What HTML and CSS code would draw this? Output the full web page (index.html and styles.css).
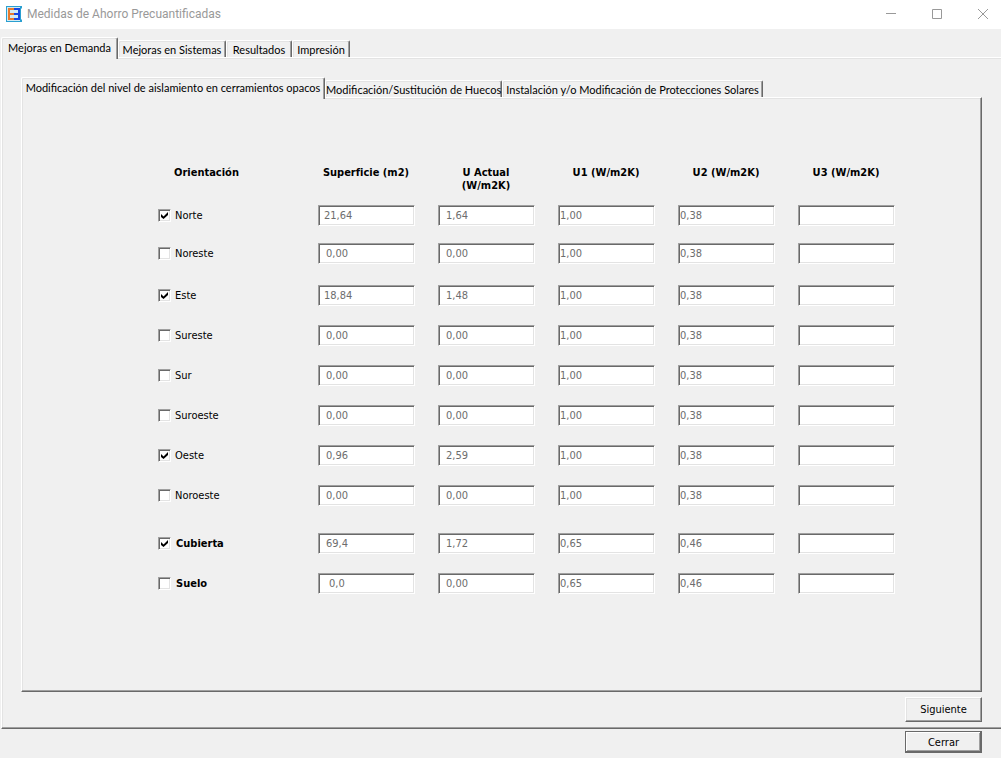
FILE: index.html
```html
<!DOCTYPE html>
<html lang="es">
<head>
<meta charset="utf-8">
<meta name="viewport" content="width=device-width, initial-scale=1">
<title>Medidas de Ahorro Precuantificadas</title>
<link rel="stylesheet" href="styles.css">
</head>
<body>
<header class="titlebar">
  <svg class="app-icon" width="16" height="16" viewBox="0 0 16 16" aria-hidden="true">
    <path fill="#2a9fd0" d="M0 0h16v2l-1 1v10l1 1v2H0z"/>
    <path fill="#d3ebf4" d="M1 1h13v14H1z"/>
    <path fill="#e87a2c" d="M2 2h6v2H4v3h4v2H4v3h4v2H2z"/>
    <path fill="#1747e0" d="M8 2h6v12H8v-2h4V9H8V7h4V4H8z"/>
  </svg>
  <h1 class="title">Medidas de Ahorro Precuantificadas</h1>
  <div class="window-controls">
    <button class="window-button" type="button" aria-label="Minimizar"><svg width="10" height="10" viewBox="0 0 10 10"><path d="M0 4.5h10"/></svg></button>
    <button class="window-button" type="button" aria-label="Maximizar"><svg width="10" height="10" viewBox="0 0 10 10"><path d="M.5.5h9v9h-9z"/></svg></button>
    <button class="window-button" type="button" aria-label="Cerrar ventana"><svg width="10" height="10" viewBox="0 0 10 10"><path d="M0 0l10 10M10 0L0 10"/></svg></button>
  </div>
</header>
<main class="workspace">
  <div class="tabs tabs-main" role="tablist">
    <button class="tab tab-active tab-demanda" type="button" role="tab" aria-selected="true">Mejoras en Demanda</button>
    <button class="tab tab-sistemas" type="button" role="tab">Mejoras en Sistemas</button>
    <button class="tab tab-resultados" type="button" role="tab">Resultados</button>
    <button class="tab tab-impresion" type="button" role="tab">Impresión</button>
  </div>
  <section class="panel panel-main">
    <div class="tabs tabs-inner" role="tablist">
      <button class="tab tab-active tab-opacos" type="button" role="tab" aria-selected="true">Modificación del nivel de aislamiento en cerramientos opacos</button>
      <button class="tab tab-huecos" type="button" role="tab">Modificación/Sustitución de Huecos</button>
      <button class="tab tab-solares" type="button" role="tab">Instalación y/o Modificación de Protecciones Solares</button>
    </div>
    <div class="panel panel-inner">
      <table class="measures">
        <thead>
          <tr><th class="col-name" scope="col">Orientación</th><th scope="col">Superficie (m2)</th><th scope="col">U Actual<br>(W/m2K)</th><th scope="col">U1 (W/m2K)</th><th scope="col">U2 (W/m2K)</th><th scope="col">U3 (W/m2K)</th></tr>
        </thead>
        <tbody>
          <tr class="row-short"><td><label class="check"><input type="checkbox" checked>Norte</label></td><td><input class="field pad-5" aria-label="Norte superficie" value="21,64" disabled></td><td><input class="field pad-7" aria-label="Norte U actual" value="1,64" disabled></td><td><input class="field" aria-label="Norte U1" value="1,00" disabled></td><td><input class="field" aria-label="Norte U2" value="0,38" disabled></td><td><input class="field" aria-label="Norte U3" disabled></td></tr>
          <tr class="row-medium"><td><label class="check"><input type="checkbox">Noreste</label></td><td><input class="field pad-7" aria-label="Noreste superficie" value="0,00" disabled></td><td><input class="field pad-7" aria-label="Noreste U actual" value="0,00" disabled></td><td><input class="field" aria-label="Noreste U1" value="1,00" disabled></td><td><input class="field" aria-label="Noreste U2" value="0,38" disabled></td><td><input class="field" aria-label="Noreste U3" disabled></td></tr>
          <tr><td><label class="check"><input type="checkbox" checked>Este</label></td><td><input class="field pad-5" aria-label="Este superficie" value="18,84" disabled></td><td><input class="field pad-7" aria-label="Este U actual" value="1,48" disabled></td><td><input class="field" aria-label="Este U1" value="1,00" disabled></td><td><input class="field" aria-label="Este U2" value="0,38" disabled></td><td><input class="field" aria-label="Este U3" disabled></td></tr>
          <tr><td><label class="check"><input type="checkbox">Sureste</label></td><td><input class="field pad-7" aria-label="Sureste superficie" value="0,00" disabled></td><td><input class="field pad-7" aria-label="Sureste U actual" value="0,00" disabled></td><td><input class="field" aria-label="Sureste U1" value="1,00" disabled></td><td><input class="field" aria-label="Sureste U2" value="0,38" disabled></td><td><input class="field" aria-label="Sureste U3" disabled></td></tr>
          <tr><td><label class="check"><input type="checkbox">Sur</label></td><td><input class="field pad-7" aria-label="Sur superficie" value="0,00" disabled></td><td><input class="field pad-7" aria-label="Sur U actual" value="0,00" disabled></td><td><input class="field" aria-label="Sur U1" value="1,00" disabled></td><td><input class="field" aria-label="Sur U2" value="0,38" disabled></td><td><input class="field" aria-label="Sur U3" disabled></td></tr>
          <tr><td><label class="check"><input type="checkbox">Suroeste</label></td><td><input class="field pad-7" aria-label="Suroeste superficie" value="0,00" disabled></td><td><input class="field pad-7" aria-label="Suroeste U actual" value="0,00" disabled></td><td><input class="field" aria-label="Suroeste U1" value="1,00" disabled></td><td><input class="field" aria-label="Suroeste U2" value="0,38" disabled></td><td><input class="field" aria-label="Suroeste U3" disabled></td></tr>
          <tr><td><label class="check"><input type="checkbox" checked>Oeste</label></td><td><input class="field pad-7" aria-label="Oeste superficie" value="0,96" disabled></td><td><input class="field pad-7" aria-label="Oeste U actual" value="2,59" disabled></td><td><input class="field" aria-label="Oeste U1" value="1,00" disabled></td><td><input class="field" aria-label="Oeste U2" value="0,38" disabled></td><td><input class="field" aria-label="Oeste U3" disabled></td></tr>
          <tr class="row-tall"><td><label class="check"><input type="checkbox">Noroeste</label></td><td><input class="field pad-7" aria-label="Noroeste superficie" value="0,00" disabled></td><td><input class="field pad-7" aria-label="Noroeste U actual" value="0,00" disabled></td><td><input class="field" aria-label="Noroeste U1" value="1,00" disabled></td><td><input class="field" aria-label="Noroeste U2" value="0,38" disabled></td><td><input class="field" aria-label="Noroeste U3" disabled></td></tr>
          <tr><td><label class="check check-strong"><input type="checkbox" checked>Cubierta</label></td><td><input class="field pad-7" aria-label="Cubierta superficie" value="69,4" disabled></td><td><input class="field pad-7" aria-label="Cubierta U actual" value="1,72" disabled></td><td><input class="field" aria-label="Cubierta U1" value="0,65" disabled></td><td><input class="field" aria-label="Cubierta U2" value="0,46" disabled></td><td><input class="field" aria-label="Cubierta U3" disabled></td></tr>
          <tr><td><label class="check check-strong"><input type="checkbox">Suelo</label></td><td><input class="field pad-10" aria-label="Suelo superficie" value="0,0" disabled></td><td><input class="field pad-7" aria-label="Suelo U actual" value="0,00" disabled></td><td><input class="field" aria-label="Suelo U1" value="0,65" disabled></td><td><input class="field" aria-label="Suelo U2" value="0,46" disabled></td><td><input class="field" aria-label="Suelo U3" disabled></td></tr>
        </tbody>
      </table>
    </div>
    <button class="push push-next" type="button">Siguiente</button>
  </section>
</main>
<footer class="footer">
  <button class="push push-default" type="button">Cerrar</button>
</footer>
</body>
</html>
```
FILE: styles.css
```css
* { box-sizing: border-box; }

body {
  margin: 0;
  min-height: 100vh;
  display: flex;
  flex-direction: column;
  background: #f0f0f0;
  color: #000;
  font: 11px/13px "DejaVu Sans Condensed", "DejaVu Sans", sans-serif;
}

button, input { font: inherit; color: inherit; }

/* Title bar */
.titlebar {
  display: flex;
  align-items: center;
  height: 29px;
  padding: 0 0 2px 6px;
  gap: 5px;
  background: #fff;
}
.title {
  flex: 1;
  margin: 0;
  color: #999;
  font: 12px/16px Roboto, "Noto Sans", sans-serif;
}
.window-controls { display: flex; }
.window-button {
  display: flex;
  align-items: center;
  justify-content: center;
  width: 46px;
  height: 26px;
  padding: 0 0 0 10px;
  border: 0;
  background: none;
}
.window-button svg { fill: none; stroke: #999; stroke-width: 1; }

/* Tabs */
.workspace { flex: 1; display: flex; flex-direction: column; }
.tabs { display: flex; align-items: flex-end; }
.tabs-main { height: 28px; padding-left: 1px; }
.tabs-inner { height: 38px; }
.tab {
  height: 17px;
  padding: 1px 0 0;
  border: 1px solid;
  border-color: #fff #696969 transparent #fff;
  border-bottom: 0;
  border-radius: 2px 2px 0 0;
  box-shadow: inset -1px 0 #a0a0a0, inset 1px 1px #e3e3e3;
  background: #f0f0f0;
  font-family: Lato, "Liberation Sans", sans-serif;
  text-align: center;
  white-space: nowrap;
}
.tab-active {
  position: relative;
  height: 22px;
  margin-bottom: -2px;
  padding: 0 0 3px;
}
.tab-demanda { width: 117px; }
.tab-sistemas { width: 108px; }
.tab-resultados { width: 66px; }
.tab-impresion { width: 58px; }
.tab-opacos { width: 304px; }
.tab-huecos { width: 177px; }
.tab-solares { width: 261px; }

/* Raised panels */
.panel {
  flex: 1;
  display: flex;
  flex-direction: column;
  border: 1px solid;
  border-color: #fff #696969 #696969 #fff;
  box-shadow: inset -1px -1px #a0a0a0, inset 1px 1px #e3e3e3;
}
.panel-main {
  margin-left: 1px;
  padding: 1px 19px 6px;
  border-right: 0;
  box-shadow: inset 0 -1px #a0a0a0, inset 1px 1px #e3e3e3;
}
.panel-inner { padding: 68px 86px 68px 136px; }

/* Measures table */
.measures {
  width: 100%;
  max-width: 737px;
  border-collapse: collapse;
  table-layout: fixed;
}
.measures th {
  padding: 0 24px 0 0;
  vertical-align: top;
  font-weight: bold;
  white-space: nowrap;
}
.measures th:last-child, .measures td:last-child { padding-right: 1px; }
.measures .col-name { width: 160px; padding: 0 0 0 16px; text-align: left; }
.measures th + th { width: 120px; }
.measures th:last-child { width: 97px; }
.measures thead tr { height: 39px; }
.measures tbody tr { height: 40px; }
.measures tbody .row-short { height: 38px; }
.measures tbody .row-medium { height: 42px; }
.measures tbody .row-tall { height: 48px; }
.measures td { padding: 0 23px 0 0; vertical-align: top; }
.measures td:last-child { padding-right: 0; }

.check { display: flex; align-items: center; gap: 4px; height: 21px; }
.check-strong { gap: 5px; font-weight: bold; }
.check input {
  appearance: none;
  width: 13px;
  height: 13px;
  margin: 0;
  border: 1px solid;
  border-color: #a0a0a0 #fff #fff #a0a0a0;
  box-shadow: inset 1px 1px #696969, inset -1px -1px #e3e3e3;
  background: #fff;
}
.check input:checked::before {
  content: "";
  display: block;
  width: 7px;
  height: 7px;
  margin: 2px;
  background: #000;
  clip-path: polygon(0 29%, 36% 64%, 100% 0, 100% 43%, 36% 100%, 0 71%);
}
.field {
  display: block;
  width: 100%;
  height: 21px;
  padding: 0 1px;
  border: 1px solid;
  border-color: #a0a0a0 #fff #fff #a0a0a0;
  border-radius: 0;
  box-shadow: inset 1px 1px #696969, inset -1px -1px #e3e3e3;
  background: #fff;
  color: #6d6d6d;
}
.pad-5 { padding-left: 5px; }
.pad-7 { padding-left: 7px; }
.pad-10 { padding-left: 10px; }

/* Push buttons */
.push {
  width: 77px;
  height: 25px;
  padding: 0;
  border: 1px solid;
  border-color: #fff #696969 #696969 #fff;
  box-shadow: inset -1px -1px #a0a0a0, inset 1px 1px #e3e3e3;
  background: #f0f0f0;
}
.push-next { align-self: flex-end; margin-top: 5px; }
.push-default {
  height: 22px;
  border-color: #696969;
  box-shadow: inset -1px -1px #696969, inset 1px 1px #fff, inset -2px -2px #a0a0a0;
}
.footer {
  display: flex;
  justify-content: flex-end;
  padding: 2px 19px 5px;
}
```
